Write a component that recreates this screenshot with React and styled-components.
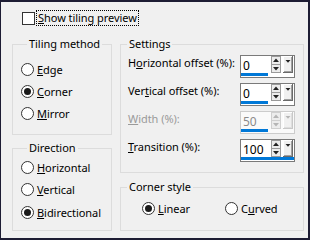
import React from "react";
import styled, { createGlobalStyle } from "styled-components";

const Global = createGlobalStyle`
  html, body { margin: 0; padding: 0; background: #f0f0f0; }
  body { font-family: "Noto Sans", "Open Sans", sans-serif; font-size: 11px; letter-spacing: -0.05px; color: #000; }
  * { box-sizing: border-box; }
`;

const Frame = styled.div`
  width: 310px;
  height: 240px;
  border-style: solid;
  border-color: #1d1c33;
  border-width: 2px 2px 2px 1px;
  background: #f0f0f0;
  display: flex;
  flex-direction: column;
  white-space: nowrap;
`;

const Header = styled.div`
  display: flex;
  align-items: center;
  gap: 1px;
  padding: 8px 0 0 21px;
  height: 24px;
`;

const CheckBox = styled.span`
  width: 13px;
  height: 13px;
  border: 1px solid #333;
  background: #fff;
  display: inline-block;
`;

const FocusLabel = styled.span`
  border: 1px dotted #000;
  padding: 0 1px;
  line-height: 14px;
  height: 16px;
`;

const Key = styled.span`
  text-decoration: underline;
  text-underline-offset: 1px;
`;

const Columns = styled.div`
  display: grid;
  grid-template-columns: 100px 184px;
  column-gap: 8px;
  padding: 10px 0 0 11px;
`;

const Column = styled.div`
  display: flex;
  flex-direction: column;
  gap: ${(p) => p.$gap}px;
`;

const Group = styled.fieldset`
  margin: 0;
  padding: ${(p) => p.$pad};
  min-width: 0;
  border: 1px solid #dcdcdc;
  height: ${(p) => p.$h}px;
  display: flex;
  flex-direction: ${(p) => (p.$row ? "row" : "column")};
`;

const Legend = styled.legend`
  margin-left: 6px;
  padding: 0 2px;
  line-height: 16px;
  height: 16px;
`;

const RadioRow = styled.label`
  display: flex;
  align-items: center;
  gap: 3px;
  height: ${(p) => p.$h || 22}px;
  width: ${(p) => (p.$w ? p.$w + "px" : "auto")};
`;

const Circle = styled.span`
  width: 13px;
  height: 13px;
  border-radius: 50%;
  border: 1px solid #333;
  background: #fff;
  display: flex;
  align-items: center;
  justify-content: center;
  &::after {
    content: "";
    width: 7px;
    height: 7px;
    border-radius: 50%;
    background: ${(p) => (p.$on ? "#1a1a1a" : "transparent")};
  }
`;

const SettingRow = styled.div`
  display: flex;
  align-items: flex-start;
  height: 23px;
  color: ${(p) => (p.$disabled ? "#9a9a9a" : "#000")};
`;

const SettingLabel = styled.span`
  flex: 1;
  padding-top: 0px;
  line-height: 16px;
`;

const Spin = styled.div`
  width: 55px;
  height: 23px;
  border: 1px solid ${(p) => (p.$disabled ? "#cccccc" : "#7a7a7a")};
  background: ${(p) => (p.$disabled ? "#fafafa" : "#fff")};
  display: flex;
  flex-direction: column;
`;

const SpinTop = styled.div`
  display: flex;
  align-items: flex-start;
  height: 17px;
  padding-right: 1px;
  gap: 2px;
`;

const Value = styled.span`
  flex: 1;
  padding-left: 2px;
  padding-top: 1px;
  font-size: 12px;
  line-height: 17px;
  color: ${(p) => (p.$disabled ? "#8a8a8a" : "#000")};
`;

const Bar = styled.div`
  height: 3px;
  background: #0078d7;
`;

const Cols2 = styled.div`
  display: grid;
  grid-template-columns: 83px auto;
  padding: 2px 0 0 21px;
`;

const UpDown = ({ disabled }) => {
  const c = disabled ? "#b5b5b5" : "#222";
  const b = disabled ? "#cfcfcf" : "#9a9a9a";
  return (
    <svg width="10" height="17" viewBox="0 0 10 17">
      <rect x="0.5" y="0.5" width="9" height="16" fill="#ececec" stroke={b} />
      <line x1="1" y1="8.5" x2="9" y2="8.5" stroke={b} />
      <polygon points="5,2.5 8,6 2,6" fill={c} />
      <polygon points="2,11 8,11 5,14.5" fill={c} />
    </svg>
  );
};

const Drop = ({ disabled }) => {
  const c = disabled ? "#b5b5b5" : "#222";
  return (
    <svg width="10" height="17" viewBox="0 0 10 17">
      <rect x="0" y="0" width="10" height="17" fill="#f0f0f0" />
      <line x1="0.5" y1="0" x2="0.5" y2="17" stroke="#fff" />
      <line x1="0" y1="0.5" x2="10" y2="0.5" stroke="#fff" />
      <line x1="9.5" y1="0" x2="9.5" y2="17" stroke={disabled ? "#c8c8c8" : "#6a6a6a"} />
      <line x1="0" y1="16.5" x2="10" y2="16.5" stroke={disabled ? "#c8c8c8" : "#6a6a6a"} />
      <line x1="8.5" y1="1" x2="8.5" y2="16" stroke={disabled ? "#dedede" : "#a0a0a0"} />
      <line x1="1" y1="15.5" x2="9" y2="15.5" stroke={disabled ? "#dedede" : "#a0a0a0"} />
      <polygon points="2.5,4 7.5,4 5,6.8" fill={c} />
    </svg>
  );
};

const SpinBox = ({ value, bar, disabled }) => (
  <Spin $disabled={disabled}>
    <SpinTop>
      <Value $disabled={disabled}>{value}</Value>
      <UpDown disabled={disabled} />
      <Drop disabled={disabled} />
    </SpinTop>
    <Bar style={{ width: bar }} />
  </Spin>
);

const Radio = ({ on, children, w, h }) => (
  <RadioRow $w={w} $h={h}>
    <Circle $on={on} />
    <span>{children}</span>
  </RadioRow>
);

const SettingsList = styled.div`
  display: flex;
  flex-direction: column;
  gap: 5px;
  padding: 3px 8px 0 7px;
`;

export default function App() {
  return (
    <Frame>
      <Global />
      <Header>
        <CheckBox />
        <FocusLabel>
          <Key>S</Key>how tiling preview
        </FocusLabel>
      </Header>
      <Columns>
        <Column $gap={5}>
          <Group $h={99} $pad="6px 0 0 8px">
            <Legend>Tiling method</Legend>
            <Radio>
              <Key>E</Key>dge
            </Radio>
            <Radio on>
              <Key>C</Key>orner
            </Radio>
            <Radio>
              <Key>M</Key>irror
            </Radio>
          </Group>
          <Group $h={91} $pad="0 0 0 8px">
            <Legend>Direction</Legend>
            <Radio h={22.5}>
              <Key>H</Key>orizontal
            </Radio>
            <Radio h={22.5}>
              <Key>V</Key>ertical
            </Radio>
            <Radio on h={22.5}>
              <Key>B</Key>idirectional
            </Radio>
          </Group>
        </Column>
        <Column $gap={6}>
          <Group $h={137} $pad="0">
            <Legend>Settings</Legend>
            <SettingsList>
              <SettingRow>
                <SettingLabel>
                  H<Key>o</Key>rizontal offset (%):
                </SettingLabel>
                <SpinBox value="0" bar={27} />
              </SettingRow>
              <SettingRow>
                <SettingLabel>
                  Ver<Key>t</Key>ical offset (%):
                </SettingLabel>
                <SpinBox value="0" bar={27} />
              </SettingRow>
              <SettingRow $disabled>
                <SettingLabel>
                  <Key>W</Key>idth (%):
                </SettingLabel>
                <SpinBox value="50" bar={27} disabled />
              </SettingRow>
              <SettingRow>
                <SettingLabel>
                  <Key>T</Key>ransition (%):
                </SettingLabel>
                <SpinBox value="100" bar={53} />
              </SettingRow>
            </SettingsList>
          </Group>
          <Group $h={52} $pad="0">
            <Legend>Corner style</Legend>
            <Cols2>
              <Radio on>
                <Key>L</Key>inear
              </Radio>
              <Radio>
                C<Key>u</Key>rved
              </Radio>
            </Cols2>
          </Group>
        </Column>
      </Columns>
    </Frame>
  );
}
